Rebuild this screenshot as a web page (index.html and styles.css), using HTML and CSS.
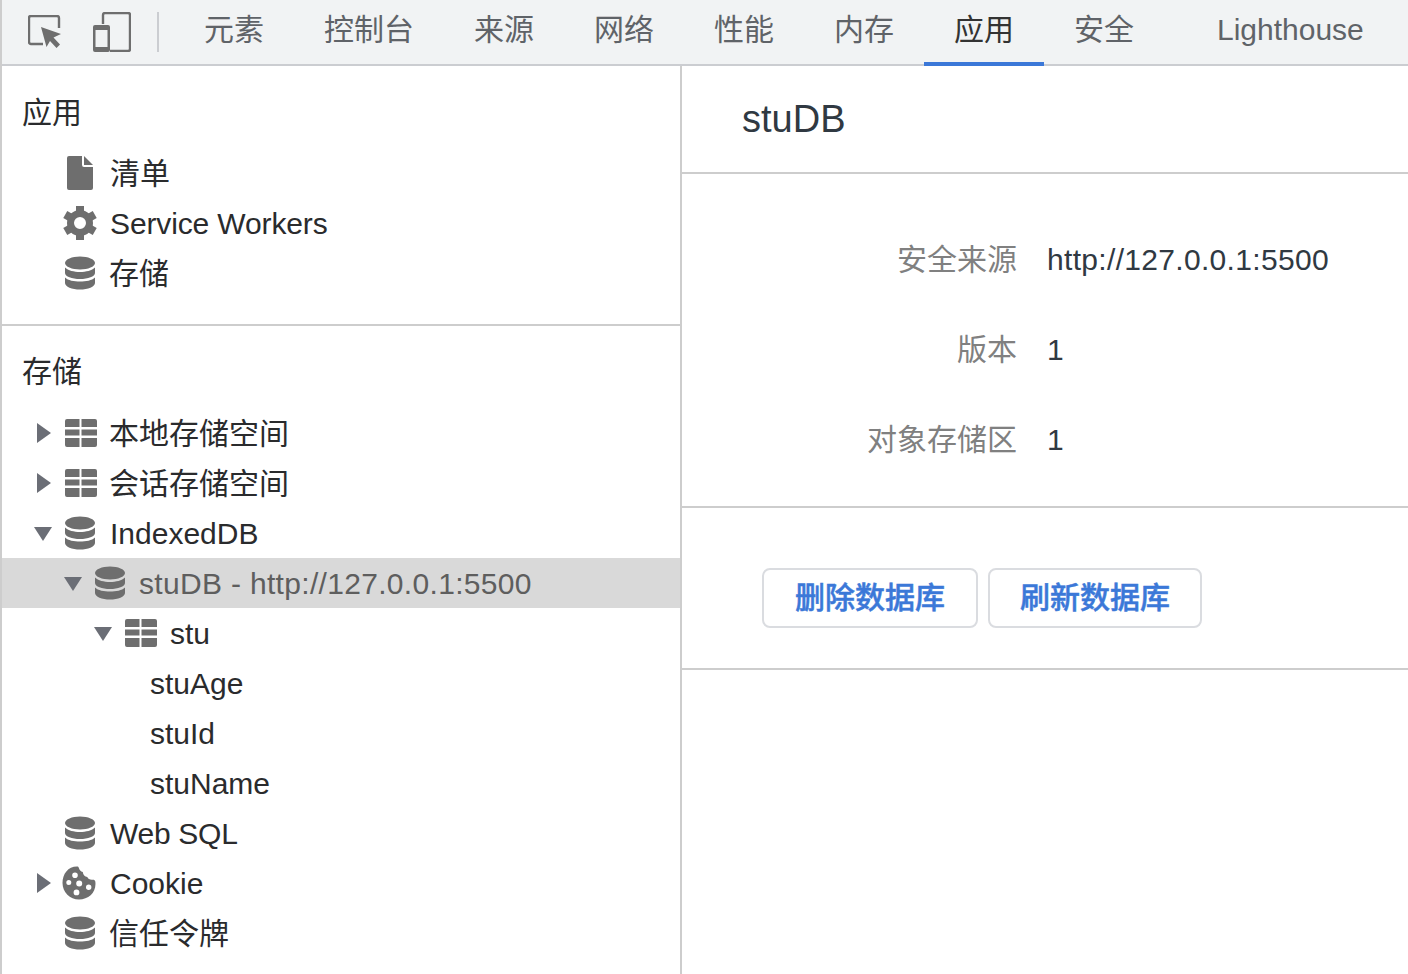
FILE: index.html
```html
<!DOCTYPE html>
<html lang="zh-CN">
<head>
<meta charset="utf-8">
<title>stuDB</title>
<link rel="stylesheet" href="styles.css">
</head>
<body>
<svg class="sprite" xmlns="http://www.w3.org/2000/svg">
  <symbol id="db" viewBox="0 0 32 34">
    <path d="M1 7c0-3.600 7-6.500 15-6.500S31 3.400 31 7s-7 6.500-15 6.500S1 10.600 1 7z"/>
    <path d="M1 11.500c3 3 9 4.500 15 4.500s12-1.500 15-4.500V17c0 3.500-7 6-15 6S1 20.500 1 17z"/>
    <path d="M1 21.500c3 3 9 4 15 4s12-1 15-4V27c0 3.800-7 6.500-15 6.500S1 30.800 1 27z"/>
  </symbol>
  <symbol id="table" viewBox="0 0 32 28">
    <path d="M2 0h12.500v8H0V2a2 2 0 0 1 2-2zM16.500 0H30a2 2 0 0 1 2 2v6H16.500zM0 10.500h14.500v6H0zM16.500 10.500H32v6H16.500zM0 19h14.500v9H2a2 2 0 0 1-2-2zM16.500 19H32v7a2 2 0 0 1-2 2H16.500z"/>
  </symbol>
  <symbol id="doc" viewBox="0 0 26 34">
    <path d="M2 0h13v9a2 2 0 0 0 2 2h9v21a2 2 0 0 1-2 2H2a2 2 0 0 1-2-2V2a2 2 0 0 1 2-2z"/>
    <path d="M17 0l9 9h-9z"/>
  </symbol>
  <symbol id="gear" viewBox="0 0 34 34">
    <circle cx="17" cy="17" r="9.500" fill="none" stroke="currentColor" stroke-width="7"/>
    <rect x="13" y="0" width="8" height="8"/>
    <rect x="13" y="26" width="8" height="8"/>
    <rect x="13" y="0" width="8" height="8" transform="rotate(60 17 17)"/>
    <rect x="13" y="26" width="8" height="8" transform="rotate(60 17 17)"/>
    <rect x="13" y="0" width="8" height="8" transform="rotate(120 17 17)"/>
    <rect x="13" y="26" width="8" height="8" transform="rotate(120 17 17)"/>
  </symbol>
  <symbol id="cookie" viewBox="0 0 34 34">
    <path fill-rule="evenodd" d="M15 0.500c1 0 1.500 .5 1.800 1.200 .5 2.300 2 3.800 4 4.300 .3 2.800 2 4.600 4.500 5 .8 1.900 2.700 3 5.500 2.700 1.300-.1 2.200 .4 2.500 1.800C34.800 26 27 33.500 17 33.500 8 33.500 .5 26 .5 17S6 .5 15 .5zM13 6.500a2.800 2.800 0 1 0 0 5.600 2.800 2.800 0 0 0 0-5.600zM6.800 14a2.500 2.500 0 1 0 0 5 2.500 2.500 0 0 0 0-5zM17.200 14.500a3 3 0 1 0 0 6 3 3 0 0 0 0-6zM26.700 18.500a2.700 2.700 0 1 0 0 5.400 2.700 2.700 0 0 0 0-5.400zM14.500 23.500a2.900 2.900 0 1 0 0 5.800 2.900 2.900 0 0 0 0-5.800z"/>
  </symbol>
</svg>

<header class="toolbar">
  <div class="tool-icons">
    <svg class="tool-inspect" viewBox="0 0 34 34" aria-hidden="true">
      <path class="line" d="M15 29H3a2 2 0 0 1-2-2V3a2 2 0 0 1 2-2h26a2 2 0 0 1 2 2v10"/>
      <path d="M13 12l20 7-7.500 3.500 6.500 7-3.500 3.500-6.500-7L18.500 32z"/>
    </svg>
    <svg class="tool-device" viewBox="0 0 38 40" aria-hidden="true">
      <path class="line" d="M10 12V3a2 2 0 0 1 2-2h23a2 2 0 0 1 2 2v34a2 2 0 0 1-2 2H17"/>
      <path d="M2 13h13a2 2 0 0 1 2 2v23a2 2 0 0 1-2 2H2a2 2 0 0 1-2-2V15a2 2 0 0 1 2-2zm.5 5v17H14.500V18z" fill-rule="evenodd"/>
    </svg>
    <span class="tool-sep"></span>
  </div>
  <nav class="tabs">
    <a class="tab">元素</a>
    <a class="tab">控制台</a>
    <a class="tab">来源</a>
    <a class="tab">网络</a>
    <a class="tab">性能</a>
    <a class="tab">内存</a>
    <a class="tab active">应用</a>
    <a class="tab">安全</a>
    <a class="tab tab-last">Lighthouse</a>
  </nav>
</header>

<main class="panes">
  <aside class="sidebar">
    <section class="group group-first">
      <h2 class="group-title">应用</h2>
      <div class="row l0"><span class="arrow"></span><svg class="ico ico-doc"><use href="#doc"/></svg><span class="label">清单</span></div>
      <div class="row l0"><span class="arrow"></span><svg class="ico ico-gear"><use href="#gear"/></svg><span class="label latin tight">Service Workers</span></div>
      <div class="row l0"><span class="arrow"></span><svg class="ico ico-db"><use href="#db"/></svg><span class="label">存储</span></div>
    </section>
    <section class="group">
      <h2 class="group-title">存储</h2>
      <div class="row l0"><span class="arrow right"></span><svg class="ico ico-table"><use href="#table"/></svg><span class="label">本地存储空间</span></div>
      <div class="row l0"><span class="arrow right"></span><svg class="ico ico-table"><use href="#table"/></svg><span class="label">会话存储空间</span></div>
      <div class="row l0"><span class="arrow down"></span><svg class="ico ico-db"><use href="#db"/></svg><span class="label latin">IndexedDB</span></div>
      <div class="row l1 selected"><span class="arrow down"></span><svg class="ico ico-db"><use href="#db"/></svg><span class="label wide">stuDB - http://127.0.0.1:5500</span></div>
      <div class="row l2"><span class="arrow down"></span><svg class="ico ico-table"><use href="#table"/></svg><span class="label latin">stu</span></div>
      <div class="row leaf"><span class="label">stuAge</span></div>
      <div class="row leaf"><span class="label">stuId</span></div>
      <div class="row leaf"><span class="label">stuName</span></div>
      <div class="row l0"><span class="arrow"></span><svg class="ico ico-db"><use href="#db"/></svg><span class="label latin tighter">Web SQL</span></div>
      <div class="row l0"><span class="arrow right"></span><svg class="ico ico-cookie"><use href="#cookie"/></svg><span class="label latin">Cookie</span></div>
      <div class="row l0"><span class="arrow"></span><svg class="ico ico-db"><use href="#db"/></svg><span class="label">信任令牌</span></div>
    </section>
  </aside>

  <section class="detail">
    <h1 class="detail-title">stuDB</h1>
    <dl class="facts">
      <div class="fact"><dt>安全来源</dt><dd class="wide">http://127.0.0.1:5500</dd></div>
      <div class="fact"><dt>版本</dt><dd>1</dd></div>
      <div class="fact"><dt>对象存储区</dt><dd>1</dd></div>
    </dl>
    <div class="actions">
      <button class="btn btn-delete">删除数据库</button>
      <button class="btn btn-refresh">刷新数据库</button>
    </div>
  </section>
</main>
</body>
</html>
```

FILE: styles.css
```css
* { box-sizing: border-box; }

html, body {
  margin: 0;
  height: 100%;
}

body {
  width: 1408px;
  height: 974px;
  overflow: hidden;
  background: #fff;
  color: #2a2b2d;
  font-family: "Liberation Sans", "Noto Sans CJK SC", sans-serif;
  font-size: 30px;
  line-height: 30px;
  border-left: 2px solid #cdcdcd;
  display: flex;
  flex-direction: column;
}

.sprite { display: none; }

.wide { letter-spacing: .32px; }
.tight { letter-spacing: -.13px; }
.tighter { letter-spacing: -.28px; }

/* toolbar */
.toolbar {
  height: 66px;
  flex: none;
  display: flex;
  background: #f1f3f4;
  border-bottom: 2px solid #cbcdd1;
}

.tool-icons {
  display: flex;
  align-items: center;
  width: 172px;
  flex: none;
}

.tool-inspect {
  width: 34px;
  height: 34px;
  margin-left: 26px;
  fill: #6e6e6e;
}

.tool-device {
  width: 38px;
  height: 40px;
  margin-left: 31px;
  fill: #6e6e6e;
}

.line {
  fill: none;
  stroke: #6e6e6e;
  stroke-width: 2.4;
}

.tool-sep {
  width: 2px;
  height: 40px;
  margin-left: 26px;
  background: #cbcdd1;
}

.tabs { display: flex; }

.tab {
  display: flex;
  align-items: center;
  padding: 0 30px 6px;
  height: 66px;
  color: #5f6368;
  white-space: nowrap;
}

.tab.active {
  color: #333;
  box-shadow: inset 0 -4px 0 #3b78d8;
}

.tab-last { margin-left: 23px; }

/* layout */
.panes {
  flex: 1;
  display: flex;
  min-height: 0;
}

.sidebar {
  width: 680px;
  flex: none;
  border-right: 2px solid #cdcdcd;
}

.group-first {
  padding-bottom: 26px;
  border-bottom: 2px solid #cdcdcd;
}

.group-title {
  margin: 0;
  height: 82px;
  padding: 31px 0 0 20px;
  font-size: 30px;
  font-weight: 400;
  line-height: 30px;
}

.group-first .group-title { padding-top: 32px; }

/* tree */
.row {
  height: 50px;
  display: flex;
  align-items: center;
  white-space: nowrap;
}

.label { margin-top: 2px; }
.latin { margin-left: 1px; }

.l0 { padding-left: 28px; }
.l1 { padding-left: 58px; }
.l2 { padding-left: 88px; }
.leaf { padding-left: 148px; }

.selected {
  background: #d9d9d9;
  color: #5e5e5e;
}

.arrow {
  width: 30px;
  height: 30px;
  flex: none;
  position: relative;
}

.arrow.right::before,
.arrow.down::before {
  content: "";
  position: absolute;
  width: 0;
  height: 0;
}

.arrow.right::before {
  left: 7px;
  top: 5px;
  border-left: 14px solid #6b6e76;
  border-top: 10px solid transparent;
  border-bottom: 10px solid transparent;
}

.arrow.down::before {
  left: 4px;
  top: 9px;
  border-top: 14px solid #6b6e76;
  border-left: 9px solid transparent;
  border-right: 9px solid transparent;
}

.ico {
  flex: none;
  color: #6e6e6e;
  fill: #6e6e6e;
}

.ico-db { width: 32px; height: 34px; margin-left: 4px; margin-right: 13px; }
.ico-table { width: 32px; height: 28px; margin-left: 5px; margin-right: 12px; }
.ico-doc { width: 26px; height: 34px; margin-left: 7px; margin-right: 17px; }
.ico-gear { width: 34px; height: 34px; margin-left: 3px; margin-right: 12px; }
.ico-cookie { width: 34px; height: 34px; margin-left: 2px; margin-right: 13px; }

/* detail */
.detail { flex: 1; min-width: 0; }

.detail-title {
  margin: 0;
  height: 108px;
  padding-left: 60px;
  border-bottom: 2px solid #cdcdcd;
  font-size: 38px;
  font-weight: 400;
  line-height: 106px;
  color: #303942;
}

.facts {
  margin: 0;
  height: 334px;
  padding-top: 41px;
  border-bottom: 2px solid #cdcdcd;
}

.fact {
  display: flex;
  align-items: center;
  height: 90px;
}

.fact dt {
  width: 335px;
  text-align: right;
  color: #808080;
}

.fact dd {
  margin: 0 0 0 30px;
  color: #303942;
}

.actions {
  height: 162px;
  display: flex;
  gap: 10px;
  padding: 60px 0 0 80px;
  border-bottom: 2px solid #cdcdcd;
}

.btn {
  height: 60px;
  padding: 0;
  background: #fff;
  border: 2px solid #dadce0;
  border-radius: 8px;
  color: #3b78d8;
  font: 500 30px/30px "Liberation Sans", "Noto Sans CJK SC", sans-serif;
  -webkit-text-stroke: .5px #3b78d8;
}

.btn-delete { width: 216px; }
.btn-refresh { width: 214px; }
```
